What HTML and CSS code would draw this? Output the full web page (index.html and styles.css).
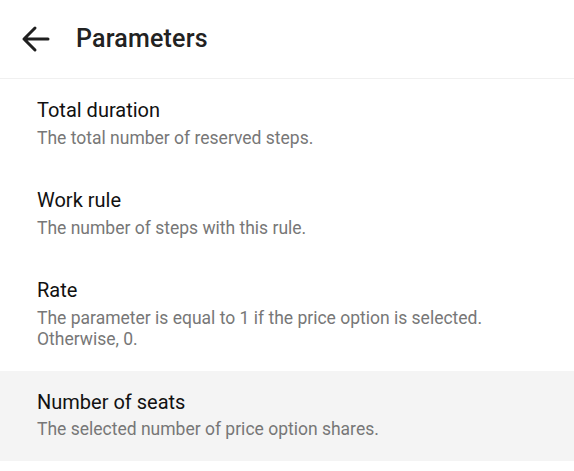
FILE: index.html
```html
<!DOCTYPE html>
<html>
<head>
<meta charset="utf-8">
<link rel="stylesheet" href="styles.css">
</head>
<body>
<div class="page">
  <header class="header">
    <button class="back" aria-label="Back">
      <svg width="32" height="28" viewBox="0 0 32 28">
        <path d="M4 14 H28 M15 3 L4 14 L15 25" fill="none" stroke="#1f1f1f" stroke-width="3" stroke-linecap="round" stroke-linejoin="round"/>
      </svg>
    </button>
    <h1 class="title">Parameters</h1>
  </header>
  <ul class="list">
    <li class="item">
      <div class="item-title">Total duration</div>
      <div class="item-sub">The total number of reserved steps.</div>
    </li>
    <li class="item">
      <div class="item-title">Work rule</div>
      <div class="item-sub">The number of steps with this rule.</div>
    </li>
    <li class="item">
      <div class="item-title">Rate</div>
      <div class="item-sub">The parameter is equal to 1 if the price option is selected.<br>Otherwise, 0.</div>
    </li>
    <li class="item item-active">
      <div class="item-title">Number of seats</div>
      <div class="item-sub">The selected number of price option shares.</div>
    </li>
  </ul>
</div>
</body>
</html>
```
FILE: styles.css
```css
* { box-sizing: border-box; }
html, body { margin: 0; padding: 0; background: #fff; }
body { font-family: Roboto, "Noto Sans", sans-serif; }
.page { width: 574px; }
.header {
  height: 79px;
  display: flex;
  align-items: center;
  padding-left: 20px;
  border-bottom: 1px solid #f0f0f0;
}
.back {
  border: 0;
  background: none;
  padding: 0;
  width: 32px;
  height: 28px;
  display: flex;
  margin-right: 24px;
}
.title {
  margin: 0;
  font-size: 25px;
  font-weight: 500;
  line-height: 30px;
  color: #222;
  letter-spacing: 0.2px;
}
.list { list-style: none; margin: 0; padding: 0; }
.item {
  padding: 19px 37px 20px 37px;
}
.item-active { background: #f4f4f4; }
.item-title {
  font-size: 20px;
  line-height: 24px;
  color: #111;
}
.item-sub {
  margin-top: 5.5px;
  font-size: 17.5px;
  line-height: 21.5px;
  color: #777;
}
```
